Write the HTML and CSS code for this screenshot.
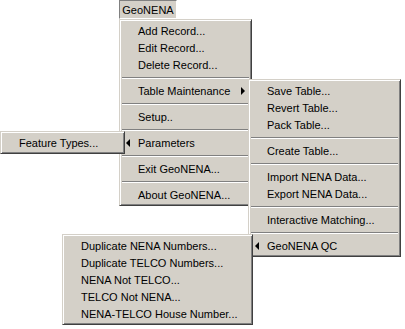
FILE: index.html
```html
<!DOCTYPE html>
<html lang="en">
	<head>
		<meta charset="UTF-8" />
		<meta name="viewport" content="width=device-width, initial-scale=1.0" />
		<title>GeoNENA Menu</title>
		<link rel="stylesheet" href="styles.css">
	</head>
	<body>
		<div class="menubar-item">GeoNENA</div>

		<div class="menu menu-main">
			<div class="item">Add Record...</div>
			<div class="item">Edit Record...</div>
			<div class="item">Delete Record...</div>
			<div class="sep"></div>
			<div class="item has-sub">Table Maintenance<span class="arrow-right"></span></div>
			<div class="sep"></div>
			<div class="item">Setup..</div>
			<div class="sep"></div>
			<div class="item sub-left"><span class="arrow-left"></span>Parameters</div>
			<div class="sep"></div>
			<div class="item">Exit GeoNENA...</div>
			<div class="sep"></div>
			<div class="item">About GeoNENA...</div>
		</div>

		<div class="menu menu-params">
			<div class="item">Feature Types...</div>
		</div>

		<div class="menu menu-table">
			<div class="item">Save Table...</div>
			<div class="item">Revert Table...</div>
			<div class="item">Pack Table...</div>
			<div class="sep"></div>
			<div class="item">Create Table...</div>
			<div class="sep"></div>
			<div class="item">Import NENA Data...</div>
			<div class="item">Export NENA Data...</div>
			<div class="sep"></div>
			<div class="item">Interactive Matching...</div>
			<div class="sep"></div>
			<div class="item sub-left"><span class="arrow-left"></span>GeoNENA QC</div>
		</div>

		<div class="menu menu-qc">
			<div class="item">Duplicate NENA Numbers...</div>
			<div class="item">Duplicate TELCO Numbers...</div>
			<div class="item">NENA Not TELCO...</div>
			<div class="item">TELCO Not NENA...</div>
			<div class="item">NENA-TELCO House Number...</div>
		</div>
	</body>
</html>
```

FILE: styles.css
```css
* {
	margin: 0;
	padding: 0;
	box-sizing: border-box;
}

body {
	background-color: #ffffff;
	width: 405px;
	height: 329px;
	position: relative;
	overflow: hidden;
	font: 11px "Liberation Sans", Arial, sans-serif;
	color: #000000;
}

/* the open item on the menu bar */
.menubar-item {
	position: absolute;
	left: 119px;
	top: 0;
	width: 58px;
	height: 19px;
	line-height: 18px;
	text-align: center;
	background-color: #d4d0c8;
	border-top: 1px solid #808080;
	border-left: 1px solid #808080;
	border-right: 1px solid #ffffff;
	border-bottom: 1px solid #ffffff;
}

/* popup menus, classic 3D frame */
.menu {
	position: absolute;
	display: flex;
	flex-direction: column;
	background-color: #d4d0c8;
	border: 1px solid;
	border-color: #d4d0c8 #404040 #404040 #d4d0c8;
	box-shadow: inset 1px 1px #ffffff, inset -1px -1px #808080;
	padding: 2px;
}

.menu-main {
	left: 119px;
	top: 19px;
	width: 133px;
	height: 187px;
}
.menu-params {
	left: 0;
	top: 131px;
	width: 125px;
	height: 23px;
}
.menu-table {
	left: 248px;
	top: 79px;
	width: 153px;
	height: 178px;
}
.menu-qc {
	left: 62px;
	top: 234px;
	width: 191px;
	height: 91px;
}

.item {
	display: flex;
	align-items: center;
	height: 17px;
	padding-left: 16px;
	padding-right: 4px;
	white-space: nowrap;
}
.item.sub-left {
	padding-left: 4px;
}

.sep {
	height: 9px;
	display: flex;
	flex-direction: column;
	justify-content: center;
}
.sep::before {
	content: '';
	display: block;
	height: 1px;
	background-color: #808080;
	border-bottom: 1px solid #ffffff;
	box-sizing: content-box;
}

.arrow-right {
	margin-left: auto;
	width: 0;
	height: 0;
	border-top: 4px solid transparent;
	border-bottom: 4px solid transparent;
	border-left: 4px solid #000000;
}
.arrow-left {
	width: 0;
	height: 0;
	margin-right: 8px;
	border-top: 4px solid transparent;
	border-bottom: 4px solid transparent;
	border-right: 4px solid #000000;
}
```
